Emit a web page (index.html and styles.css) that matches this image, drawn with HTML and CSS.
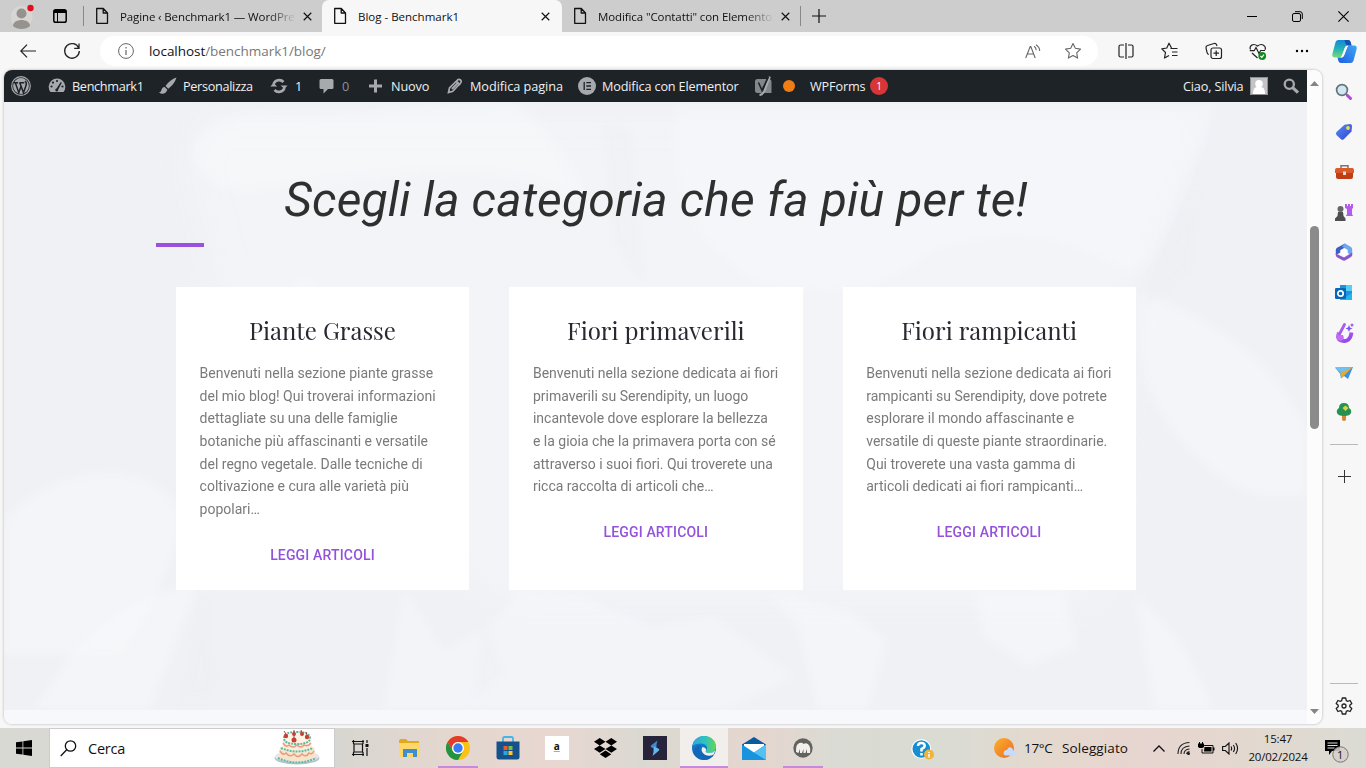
FILE: index.html
```html
<!DOCTYPE html>
<html lang="it">
<head>
<meta charset="utf-8">
<title>Blog - Benchmark1</title>
<link rel="stylesheet" href="styles.css">
</head>
<body>
<svg class="defs" width="0" height="0" aria-hidden="true">
  <defs>
    <symbol id="doc" viewBox="0 0 14 18"><path d="M1.700 1.500h6.600L12.500 6v10.300H1.700zM8.200 1.500V6h4.300" fill="none" stroke="currentColor" stroke-width="1.300" stroke-linejoin="round"/></symbol>
    <symbol id="cross" viewBox="0 0 10 10"><path d="M.8.8l8.400 8.400M9.200.8L.8 9.200" stroke="currentColor" stroke-width="1.300"/></symbol>
    <linearGradient id="gPurple" x1="0" y1="0" x2="1" y2="1"><stop offset="0" stop-color="#c86bf5"/><stop offset="1" stop-color="#8a3ff0"/></linearGradient>
    <linearGradient id="gBlue" x1="0" y1="0" x2="1" y2="1"><stop offset="0" stop-color="#4d93f7"/><stop offset="1" stop-color="#3a3fd2"/></linearGradient>
    <linearGradient id="gEdge" x1="0" y1="0" x2="1" y2="0"><stop offset="0" stop-color="#2aa6e0"/><stop offset=".55" stop-color="#2fc4bd"/><stop offset="1" stop-color="#66d653"/></linearGradient>
    <linearGradient id="gEdgeB" x1="0" y1="0" x2="0" y2="1"><stop offset="0" stop-color="#1a8edb"/><stop offset="1" stop-color="#0c5aa8"/></linearGradient>
    <linearGradient id="gCopA" x1="0" y1="0" x2="0" y2="1"><stop offset="0" stop-color="#1688d8"/><stop offset=".5" stop-color="#24b2b6"/><stop offset="1" stop-color="#78dc76"/></linearGradient>
    <linearGradient id="gCopB" x1="1" y1="0" x2="0" y2="1"><stop offset="0" stop-color="#3fa6f5"/><stop offset="1" stop-color="#1d5fe0"/></linearGradient>
    <linearGradient id="gSun" x1="0" y1="0" x2="1" y2="1"><stop offset="0" stop-color="#fbb02d"/><stop offset="1" stop-color="#ed6b1f"/></linearGradient>
  </defs>
</svg>

<header class="tabstrip">
  <div class="profile"><svg width="24" height="26" viewBox="0 0 24 26"><circle cx="10.500" cy="14" r="11" fill="#d8d6d3"/><circle cx="10.500" cy="10.500" r="5" fill="#96938f"/><path d="M2 23c0-8 17-8 17 0-4 4-13 4-17 0z" fill="#96938f"/><circle cx="19.500" cy="5" r="3.200" fill="#e0101f"/></svg></div>
  <div class="workspace"><svg width="14" height="14" viewBox="0 0 14 14"><rect x=".8" y=".8" width="12.400" height="12.400" rx="1.800" fill="none" stroke="#000" stroke-width="1.500"/><path d="M1 1h12v3H1z"/><path d="M4.500 4v9" stroke="#000"/></svg></div>
  <div class="tab tab-first"><svg class="doc"><use href="#doc"/></svg><span class="tab-title faded">Pagine ‹ Benchmark1 — WordPre</span><svg class="close"><use href="#cross"/></svg></div>
  <div class="tab tab-active"><svg class="doc"><use href="#doc"/></svg><span class="tab-title">Blog - Benchmark1</span><svg class="close"><use href="#cross"/></svg></div>
  <div class="tab tab-last"><svg class="doc"><use href="#doc"/></svg><span class="tab-title faded">Modifica "Contatti" con Elemento</span><svg class="close"><use href="#cross"/></svg></div>
  <div class="new-tab"><svg width="14" height="14" viewBox="0 0 14 14"><path d="M7 0v14M0 7h14" stroke="#111" stroke-width="1.200"/></svg></div>
  <div class="window-buttons">
    <svg width="10" height="10"><path d="M0 5.500h10" stroke="#000"/></svg>
    <svg width="11" height="11" viewBox="0 0 11 11" fill="none" stroke="#000"><rect x=".5" y="2.500" width="8" height="8" rx="1.500"/><path d="M3 .7h5q2.300 0 2.300 2.300v5"/></svg>
    <svg width="11" height="11" viewBox="0 0 10 10"><path d="M.3.3l9.400 9.400M9.700.3L.3 9.700" stroke="#000"/></svg>
  </div>
</header>

<nav class="toolbar">
  <div class="slot"><svg width="16" height="14" viewBox="0 0 16 14" fill="none" stroke="#222" stroke-width="1.200"><path d="M7 .7L.8 7 7 13.300M1 7h15"/></svg></div>
  <div class="slot"><svg width="18" height="18" viewBox="0 0 18 18" fill="none" stroke="#222" stroke-width="1.300"><path d="M15.700 6A7.300 7.300 0 1 0 16.300 9M16 1.500V6.300h-4.800"/></svg></div>
  <div class="address">
    <svg width="16" height="16" viewBox="0 0 16 16"><circle cx="8" cy="8" r="7.400" fill="none" stroke="#666"/><path d="M8 7v5M8 4v1.400" stroke="#555" stroke-width="1.100"/></svg>
    <span class="url"><b>localhost</b>/benchmark1/blog/</span>
    <svg class="read" width="16" height="15" viewBox="0 0 16 15" fill="none" stroke="#666" stroke-width="1.100"><path d="M.7 14L5.200 2.500h.6L10.200 14M2.300 10h6.500M9.200 2.200q2 1.500 2 4M11 .7q3.700 2.400 3.700 6.300"/></svg>
    <svg width="18" height="18" viewBox="0 0 18 18"><path d="M9 1.500l2.300 4.800 5.200.8-3.800 3.700.9 5.300L9 13.500l-4.600 2.600.9-5.300L1.500 7.100l5.200-.8z" fill="none" stroke="#666" stroke-width="1.100" stroke-linejoin="round"/></svg>
  </div>
  <div class="slot"><svg width="16" height="16" viewBox="0 0 16 16" fill="none" stroke="#222" stroke-width="1.200"><path d="M6 2H2.500Q1 2 1 3.500v9Q1 14 2.500 14H6M10 2h3.500Q15 2 15 3.500v9q0 1.500-1.500 1.500H10M8 0v16"/></svg></div>
  <div class="slot"><svg width="18" height="18" viewBox="0 0 18 18" fill="none" stroke="#222" stroke-width="1.200" stroke-linejoin="round"><path d="M10.500 6L8 1.200 5.800 6l-5 .8 3.700 3.700-1 5.500L8 13.400M9.500 6.500h7M11 10h5.500M11 13.500h5.500"/></svg></div>
  <div class="slot"><svg width="18" height="18" viewBox="0 0 18 18" fill="none" stroke="#222" stroke-width="1.200"><rect x="6" y="6" width="10.500" height="10.500" rx="2"/><path d="M11.200 8.500v5.500M8.500 11.200H14M3.800 12.500Q2.500 12 2 10.300L1 6q-.3-2 1.500-2.500l6.500-2q2-.4 2.700 1.500l.3 1"/></svg></div>
  <div class="slot"><svg width="18" height="18" viewBox="0 0 18 18" fill="none" stroke="#222" stroke-width="1.200"><path d="M1.500 7.500C0 4 4 .5 8.500 4 13 .5 17.500 4 16 7.700M.8 8.700h4.400L7 5.500l3 6 1.700-3H16M3 11l5.500 5"/><circle cx="13.200" cy="14" r="3.900" fill="#168822" stroke="none"/><path d="M11.500 14l1.300 1.300 2.200-2.700" stroke="#fff"/></svg></div>
  <div class="slot"><svg width="14" height="4" viewBox="0 0 14 4"><circle cx="2" cy="2" r="1.200"/><circle cx="7" cy="2" r="1.200"/><circle cx="12" cy="2" r="1.200"/></svg></div>
  <div class="slot"><svg width="25" height="23" viewBox="0 0 25 23"><path d="M6.500 0H16q2 0 2.600 2l.9 3.500h-3.800q-2 0-2.700 2L10 15.500Q9.300 17.500 7 17.500H3q-3.500 0-2.500-4L3.300 3Q4 0 6.500 0z" fill="url(#gCopA)"/><path d="M18.500 23H9q-2 0-2.600-2l-.9-3.500h3.800q2 0 2.700-2L15 7.500q.7-2 3-2h4q3.500 0 2.500 4L21.700 20q-.7 3-3.200 3z" fill="url(#gCopB)"/><path d="M12.500 0H16q2 0 2.600 2l.9 3.500h-3.800Q13.500 5 12.500 0z" fill="#174fb5"/><path d="M16.500 5.700q-1 .6-1.500 2L12 15.500q-.7 2-2.700 2H8.500q1-.6 1.500-2l3-8q.7-1.800 2.700-1.800z" fill="#fff"/></svg></div>
</nav>

<div class="middle">
  <section class="viewport">
    <div class="site">
      <div class="adminbar">
        <svg width="20" height="20" viewBox="0 0 20 20"><circle cx="10" cy="10" r="9.300" fill="none" stroke="#a7aaad" stroke-width="1.200"/><circle cx="10" cy="10" r="7.900" fill="#a7aaad"/><path d="M2.800 6.700h4.300M8.300 6.700h5M4.300 6.800l3.500 10 2.200-6.500M8.800 6.800l3.700 10L15 9.500q1-3-1-4.500" fill="none" stroke="#1d2327" stroke-width="1.500"/></svg>
        <svg width="18" height="18" viewBox="0 0 18 18"><path d="M2.500 15A8.300 8.300 0 1 1 15.500 15z" fill="#a7aaad"/><g fill="#1d2327"><circle cx="9" cy="4" r="1.100"/><circle cx="5" cy="5.600" r="1.100"/><circle cx="3.500" cy="9.500" r="1.100"/><circle cx="14.500" cy="9.500" r="1.100"/><path d="M12.800 5l1 .7-3.600 6.800a1.500 1.500 0 1 1-1.700-1z"/></g></svg>
        <span class="tight">Benchmark1</span>
        <svg width="18" height="18" viewBox="0 0 18 18" fill="#a7aaad"><path d="M17.500.5Q11 2.500 6.500 9l2.800 2.800Q15.500 7 17.500.5zM5.700 10Q3 10 2.500 13 2 15.300 0 15.800q6 3 8.400-3z"/></svg>
        <span class="tight">Personalizza</span>
        <svg width="18" height="18" viewBox="0 0 18 18"><path d="M3.500 7A6 6 0 0 1 13.500 5M14.500 11A6 6 0 0 1 4.500 13" fill="none" stroke="#a7aaad" stroke-width="2.600"/><path d="M10.500 8.500h7L14.500 12zM.3 9.500L3.500 6l3.700 3.500z" fill="#a7aaad"/></svg>
        <span>1</span>
        <svg width="16" height="18" viewBox="0 0 16 18"><path d="M2 2h11q1.500 0 1.500 1.500v7q0 1.500-1.500 1.500H9l-4.500 4.500V12H2Q.5 12 .5 10.500v-7Q.5 2 2 2z" fill="#a7aaad"/></svg>
        <span class="dim">0</span>
        <svg width="15" height="14" viewBox="0 0 15 14"><path d="M7.500 .5v13M1 7h13" stroke="#a7aaad" stroke-width="3"/></svg>
        <span>Nuovo</span>
        <svg width="16" height="16" viewBox="0 0 16 16"><path d="M1.500 14.500l1-4.500L10.500 2q1.500-1.300 3 0t0 3L5.800 13.300z" fill="none" stroke="#a7aaad" stroke-width="1.700"/><path d="M5 11l6-6.300M9 3l4 4" stroke="#a7aaad" stroke-width="2"/></svg>
        <span class="loose">Modifica pagina</span>
        <svg width="18" height="18" viewBox="0 0 18 18"><circle cx="9" cy="9" r="9" fill="#a7aaad"/><path d="M6.200 5v8M8.300 5.700h4.700M8.300 9h4.700M8.300 12.300h4.700" stroke="#1d2327" stroke-width="1.300"/></svg>
        <span>Modifica con Elementor</span>
        <svg width="19" height="20" viewBox="0 0 19 20"><path d="M3.500 3h9L7.500 17H3.500Q1 17 1 14.500v-9Q1 3 3.500 3zM15.500 3q2 .5 2 2.500V17H10z" fill="#82878c"/><path d="M15.800.7l-4.600 12.500Q9.500 18.500 5.500 19" fill="none" stroke="#a7aaad" stroke-width="2.200"/><path d="M4.500 6.500l3.400 7.700L14.500.8" fill="none" stroke="#1d2327" stroke-width="1.600"/></svg>
        <i class="seo-dot"></i>
        <span>WPForms</span>
        <em class="badge">1</em>
        <span>Ciao, Silvia</span>
        <svg class="avatar" width="18" height="18" viewBox="0 0 18 18"><path d="M0 0h18v18H0z" fill="#c3c4c7"/><circle cx="9" cy="6.800" r="3.800" fill="#fff"/><path d="M3 17q0-7 4-7h4q4 0 4 7z" fill="#fff"/><path d="M.5.500h17v17H.500z" fill="none" stroke="#8c8f94"/></svg>
        <svg width="17" height="17" viewBox="0 0 17 17" fill="none" stroke="#a7aaad"><circle cx="6.300" cy="6.300" r="4.600" stroke-width="2.300"/><path d="M9.700 9.700l5.300 5" stroke-width="3.200"/></svg>
      </div>
      <main class="hero">
        <svg class="petals" viewBox="0 0 1303 608" preserveAspectRatio="none" aria-hidden="true">
          <defs><filter id="soft"><feGaussianBlur stdDeviation="4"/></filter><filter id="wide"><feGaussianBlur stdDeviation="16"/></filter></defs>
          <path d="M200 10H1200L1130 170 1100 500H500L250 330 180 60z" fill="#f6f8fb" opacity=".45" filter="url(#wide)"/>
          <g fill="#f7f9fc" filter="url(#soft)">
            <path d="M186 52Q196 14 250 10l60 2 200-12q60 40 72 108-50-40-160-36-110 10-180 20Q200 88 186 52z" opacity=".5"/>
            <path d="M672 4h540q-22 66-62 150l-22 22q-90-66-200-26-60 60-180 30-90-60-76-176z" opacity=".4"/>
            <path d="M1136 188q130 50 167 140v66q-60 10-100-30-80-60-67-176z" opacity=".5"/>
            <path d="M0 420q36-48 110-50 70 10 66 60-20 70-60 123H0z" opacity=".5"/>
            <path d="M290 182q20-20 26 10l-26 10zM196 480l-50 128H30q60-110 166-128z" opacity=".5"/>
            <path d="M400 485l40 65 50-30 30-35 60 10 70 30 60-10 80 60-70 33H380z" opacity=".4"/>
            <path d="M764 488l80 20 40 30-20 70h-50l-20-80zM970 488l90-3 14 60-50 20-46-30zM1130 490q50 40 80 118h-60z" opacity=".5"/>
          </g>
          <g fill="#ebedf2" filter="url(#soft)">
            <path d="M600 20l10 120 30 40-14-150zM1140 186l56-100-10 80-46 40zM200 490l-20 110 30-10zM480 520l-10 80 30-30z" opacity=".35"/>
          </g>
        </svg>
        <div class="container">
          <h1>Scegli la categoria che fa più per te!</h1>
          <div class="accent"></div>
          <div class="cards">
            <article class="card">
              <h2>Piante Grasse</h2>
              <p>Benvenuti nella sezione piante grasse<br>del mio blog! Qui troverai informazioni<br>dettagliate su una delle famiglie<br>botaniche più affascinanti e versatile<br>del regno vegetale. Dalle tecniche di<br>coltivazione e cura alle varietà più<br>popolari…</p>
              <a>LEGGI ARTICOLI</a>
            </article>
            <article class="card">
              <h2>Fiori primaverili</h2>
              <p>Benvenuti nella sezione dedicata ai fiori<br>primaverili su Serendipity, un luogo<br>incantevole dove esplorare la bellezza<br>e la gioia che la primavera porta con sé<br>attraverso i suoi fiori. Qui troverete una<br>ricca raccolta di articoli che…</p>
              <a>LEGGI ARTICOLI</a>
            </article>
            <article class="card">
              <h2>Fiori rampicanti</h2>
              <p>Benvenuti nella sezione dedicata ai fiori<br>rampicanti su Serendipity, dove potrete<br>esplorare il mondo affascinante e<br>versatile di queste piante straordinarie.<br>Qui troverete una vasta gamma di<br>articoli dedicati ai fiori rampicanti…</p>
              <a>LEGGI ARTICOLI</a>
            </article>
          </div>
        </div>
      </main>
    </div>
    <div class="scrollbar">
      <svg width="9" height="5"><path d="M0 5L4.500 0 9 5z" fill="#858585"/></svg>
      <div class="thumb"></div>
      <svg width="9" height="5"><path d="M0 0l4.500 5L9 0z" fill="#858585"/></svg>
    </div>
  </section>
  <aside class="sidebar">
    <div><svg width="18" height="18" viewBox="0 0 18 18"><circle cx="7" cy="7" r="5.400" fill="#cfe8f3" stroke="#66727b" stroke-width="1.700"/><path d="M11 11l1.500 1.500" stroke="#777" stroke-width="2"/><path d="M12.500 12.500l3 3" stroke="#ad48dc" stroke-width="3" stroke-linecap="round"/></svg></div>
    <div><svg width="18" height="18" viewBox="0 0 18 18"><path d="M9.500 1.700L15 1q2 0 2 2l-.5 5.500-7.700 7.800q-1.500 1-2.800 0L1.500 12q-1.200-1.500 0-3z" fill="url(#gBlue)"/><circle cx="13" cy="5" r="1.900" fill="#f3df3b"/></svg></div>
    <div><svg width="19" height="16" viewBox="0 0 19 16"><path d="M6 4V1.700h7V4" fill="none" stroke="#777" stroke-width="1.500"/><rect x="1" y="4" width="17" height="11" rx="2" fill="#bf3e16"/><path d="M0 6q0-2 2-2h15q2 0 2 2v3H0z" fill="#da5a2b"/><rect x="8" y="7.500" width="3" height="3.500" fill="#ddd"/></svg></div>
    <div><svg width="20" height="19" viewBox="0 0 20 19"><path d="M11 1h2v2h1V1h2v2h1V1h2v4l-1 1v5l1 2h-7l1-2V6l-2-1z" fill="#b45bee"/><circle cx="6.500" cy="6" r="3" fill="#666"/><path d="M4 9h5l.5 4 2 2.500V18H1v-2.500L3.500 13z" fill="#4e4e4e"/></svg></div>
    <div><svg width="18" height="18" viewBox="0 0 18 18"><path d="M10 .5L2 4.800Q.8 5.500.8 7v5L5.500 9.500V7.200L12 3.500z" fill="#3d5fc4"/><path d="M10 .5l6 3.500q1.200.8 1.200 2.200v6L12.500 10V6.800L7 3.500z" fill="#6fa8ee"/><path d="M.8 10.500L9 14.500l8.200-5v2.600q0 1.200-1.200 2l-5.500 3.200q-1.500.8-3 0L2 14.300Q.8 13.500.8 12z" fill="#8a55cc"/><path d="M9 5.200l3.500 2v3.600L9 12.800l-3.500-2V7.200z" fill="#fff"/></svg></div>
    <div><svg width="18" height="18" viewBox="0 0 18 18"><path d="M5 1h12v15H5z" fill="#2192df"/><path d="M11 1h6v6h-6z" fill="#51d0f6"/><path d="M5 10l6 3 6-4v7H5z" fill="#21b8ed"/><rect x="0" y="4" width="11" height="11" rx="1.300" fill="#0668bb"/><circle cx="5.500" cy="9.500" r="2.700" fill="none" stroke="#fff" stroke-width="1.700"/></svg></div>
    <div><svg width="19" height="20" viewBox="0 0 19 20"><path d="M4 9.500q-3 6 2 8 9 2.500 10.500-8" fill="none" stroke="url(#gPurple)" stroke-width="3.800"/><path d="M2 12h6l1 3q-2 4-5 2.500-3-2-2-5.500z" fill="#c46df3"/><path d="M9.500 1.500L4.500 11" stroke="#a95bed" stroke-width="2.800" stroke-linecap="round"/><path d="M14 2l1 2.500L17.500 5.500 15 6.500 14 9l-1-2.500-2.500-1L13 4.500z" fill="#7755ee"/><circle cx="17" cy="2" r="1.500" fill="#a460f0"/></svg></div>
    <div><svg width="18" height="14" viewBox="0 0 18 14"><path d="M0 1.500L18 1l-5 12-4-3-3 2.500-1-5z" fill="#3393e8"/><path d="M0 1.500L18 1 6 7z" fill="#6fc3f3"/><path d="M5 7L18 1 6.500 12z" fill="#e7a936"/></svg></div>
    <div><svg width="16" height="19" viewBox="0 0 16 19"><path d="M6 11h4v6q-2 2-4 0z" fill="#d38b3b"/><path d="M8 0q5 0 5 5 3 2 2 5-1 3-7 3T1 10q-1-3 2-5 0-5 5-5z" fill="#259153"/><path d="M9.500 2.500l3 2.500-3 3-3-3z" fill="#d6d737"/></svg></div>
    <hr>
    <div class="add"><svg width="13" height="13"><path d="M6.500 0v13M0 6.500h13" stroke="#333"/></svg></div>
    <hr class="low">
    <div class="gear"><svg width="18" height="18" viewBox="0 0 18 18" fill="none" stroke="#222" stroke-width="1.300" stroke-linejoin="round"><path d="M7.300 1h3.400l.6 2.600 1.200.7 2.600-.8 1.700 3-2 1.800v1.400l2 1.800-1.700 3-2.600-.8-1.200.7-.6 2.600H7.300l-.6-2.600-1.200-.7-2.600.8-1.700-3 2-1.800V8.300l-2-1.800 1.700-3 2.600.8 1.200-.7z"/><circle cx="9" cy="9" r="2"/></svg></div>
  </aside>
</div>

<footer class="taskbar">
  <div class="start"><svg width="16" height="16" viewBox="0 0 16 16"><path d="M0 2.300l6.500-.9v6.200H0zM7.300 1.300L16 0v7.600H7.300zM0 8.400h6.500v6.200L0 13.700zM7.300 8.400H16V16l-8.700-1.300z"/></svg></div>
  <div class="search">
    <svg width="17" height="17" viewBox="0 0 17 17" fill="none" stroke="#111" stroke-width="1.300"><circle cx="10.500" cy="6" r="5.200"/><path d="M6.700 9.800L.7 16"/></svg>
    <span>Cerca</span>
    <svg class="cake" width="46" height="36" viewBox="0 0 46 36"><ellipse cx="23" cy="28" rx="22.500" ry="6.500" fill="#b7c4cc"/><ellipse cx="23" cy="26.500" rx="22" ry="6" fill="#e3e8eb"/><path d="M6 17q17 6 34 0l2 11q-19 9-38 0z" fill="#f6e5cb"/><path d="M9 10q14 5 28 0l1 10q-15 6-30 0z" fill="#fbefd9"/><ellipse cx="23" cy="8" rx="13.500" ry="5" fill="#fff4e2"/><g fill="none" stroke="#5eb8aa" stroke-width="2" stroke-dasharray="2 1"><path d="M10 8q0-6 13-6t13 6-13 6-13-6M7 18q16 7 32 0M4 28q19 9 38 0"/></g><path d="M6 21q3 5 6 2 4 5 8 1 4 5 8 0 4 4 7-1 3 2 5-2M9 13q3 5 6 2 4 4 8 0 4 4 7 0 4 2 7-2" fill="none" stroke="#e89a83" stroke-width="1.500"/><g fill="#c63f36"><circle cx="12" cy="6" r="2.200"/><circle cx="20" cy="4" r="2"/><circle cx="28" cy="4" r="2"/><circle cx="33" cy="7" r="2.200"/><circle cx="20" cy="10" r="2.500"/></g><path d="M12 4l-2-3M20 3V0M28 3l-1-3M33 5l-1-3M20 8V5" stroke="#a44"/></svg>
  </div>
  <div class="apps">
    <div><svg width="17" height="16" viewBox="0 0 17 16" fill="none" stroke="#111" stroke-width="1.200"><path d="M0 1.500h12M0 14.500h12M2 4h8.500v8H2zM1.500 0v4M1.500 12v4M11 0v4M11 12v4M15 0v3M15 8v8"/><path d="M13.500 4h3v3h-3z" fill="#111" stroke="none"/></svg></div>
    <div><svg width="21" height="18" viewBox="0 0 21 18"><path d="M0 2q0-2 2-2h5l2 2h11v15H0z" fill="#e2a91f"/><path d="M0 4h21v14H0z" fill="#ffd767"/><path d="M4 18v-8h14v8h-4v-4H8v4z" fill="#3f8fd0"/></svg></div>
    <div class="open"><svg width="24" height="24" viewBox="0 0 24 24"><circle cx="12" cy="12" r="12" fill="#fbc116"/><path d="M1.600 6A12 12 0 0 1 22.400 6H12a6 6 0 0 0-5.200 9z" fill="#e33b2e"/><path d="M1.600 6A12 12 0 0 0 12 24l5.200-9a6 6 0 0 1-10.400 0z" fill="#229342"/><circle cx="12" cy="12" r="6" fill="#fff"/><circle cx="12" cy="12" r="4.700" fill="#3a7af2"/></svg></div>
    <div><svg width="24" height="24" viewBox="0 0 24 24"><path d="M7 6V2.500Q7 1 8.500 1h7Q17 1 17 2.500V6" fill="none" stroke="#45b5e6" stroke-width="1.800"/><path d="M.5 5.500h23V21q0 2.500-2.500 2.500H3Q.5 23.500.5 21z" fill="#17518b"/><path d="M7.500 10h4v4h-4z" fill="#f15b2a"/><path d="M12.500 10h4v4h-4z" fill="#80bd3d"/><path d="M7.500 15h4v4h-4z" fill="#26a9e1"/><path d="M12.500 15h4v4h-4z" fill="#fec52e"/></svg></div>
    <div><b class="amazon">a</b></div>
    <div><svg width="23" height="21" viewBox="0 0 23 21"><path d="M5.700 0l5.800 3.700-5.800 3.700L0 3.700zM17.300 0L23 3.700l-5.700 3.700-5.800-3.700zM0 11.100l5.700-3.700 5.800 3.700-5.800 3.700zM17.300 7.400l5.700 3.700-5.700 3.700-5.800-3.700zM5.800 16.200l5.700-3.700 5.800 3.700-5.800 3.700z"/></svg></div>
    <div><svg width="24" height="24" viewBox="0 0 24 24"><path d="M0 0h24v24H0z" fill="#27233b"/><path d="M14.500 4.500L8 9.500q-.8 1 .3 1.800l4.700 2.200.5-3q-.3-1.500 1-6z" fill="#3e8bd3"/><path d="M9.500 20l6.500-5.500q.8-1-.3-1.800L11 10.500l-.5 3q.5 1.500-1 6.500z" fill="#62b8f2"/></svg></div>
    <div class="open current"><svg width="24" height="24" viewBox="0 0 24 24"><circle cx="12" cy="12" r="12" fill="url(#gEdgeB)"/><path d="M.3 10C2 3 7 0 12 0c7 0 12 5 12 10.500 0 5-4 6.500-7 6.500-3 0-4-1.300-3-2.500 3-4-1-7-5-7-4 0-7 1-8.700 2.500z" fill="url(#gEdge)"/><path d="M9 9q-3.500 4-.5 8.500 4.500 5.500 13 1.700Q18 24 12 24 2 23 2.500 15 3 9 9 9z" fill="#1267b8"/><path d="M14 14.500q-1.500 2 3 2.500 4 0 6.300-2.500l-1.600 4Q17 21 12.500 18.500 8 15 10.500 11q4 .5 3.500 3.500z" fill="#f2efed"/></svg></div>
    <div><svg width="24" height="23" viewBox="0 0 24 23"><path d="M0 7.500L12 0l12 7.500v5H0z" fill="#095b9e"/><path d="M2 7h20v7l-10 4L2 14z" fill="#fff"/><path d="M0 7.500l12 8 12-8V23H0z" fill="#1a93df"/><path d="M12 15.500l12-8V23z" fill="#55c1f3"/></svg></div>
    <div class="open small"><svg width="20" height="20" viewBox="0 0 20 20"><circle cx="10" cy="10" r="9.700" fill="#62625f"/><path d="M3 14q-.5-8 3.500-9 3-.7 4 1 4-2 6 2 1.500 3 .5 7h-3v-4l-1.500 4h-2v-4l-1.500 4H7v-4l-1.500 4z" fill="#f2efec"/></svg></div>
  </div>
  <div class="help"><svg width="23" height="21" viewBox="0 0 23 21"><circle cx="10.300" cy="10" r="9.400" fill="#168ed0" stroke="#fff" stroke-width="1.200"/><path d="M7 7q0-3 3.300-3t3.400 2.700q0 2-3.200 3.300v2.500M10.500 14v2.500" fill="none" stroke="#fff" stroke-width="2.500"/><circle cx="18" cy="15.500" r="5" fill="#efb438"/><path d="M18 13v1M18 15v3.500" stroke="#fff" stroke-width="1.500"/></svg></div>
  <div class="weather"><svg width="22" height="21" viewBox="0 0 22 21"><circle cx="10" cy="10" r="10" fill="url(#gSun)"/><path d="M11.500 17.500q-3-1-1.500-4 1-2 3-1.500 1-3.500 4-2.500 2 .6 2 3 3 .5 2.700 3-.5 2-3 2z" fill="#c7dcfb"/></svg><span class="temp">17°C</span><span class="sky">Soleggiato</span></div>
  <div class="tray">
    <svg width="12" height="7" viewBox="0 0 12 7"><path d="M.5 6.500L6 1l5.500 5.500" fill="none" stroke="#111" stroke-width="1.300"/></svg>
    <svg class="wifi" width="14" height="14" viewBox="0 0 14 14" fill="none" stroke="#222" stroke-width="1.100"><path d="M1 13Q1 2 12.500 1.500M4 13q0-7.500 8.500-8M7 13q0-4.500 5.500-5M9.700 13q0-2 2.800-2.500"/><circle cx="11.500" cy="12.500" r="1" fill="#111"/></svg>
    <svg class="battery" width="17" height="13" viewBox="0 0 17 13"><path d="M5.500 3.500h9.500v7.500H4V7" fill="none" stroke="#111"/><path d="M6.500 5h7v4.500H6zM15 5.500h1.500v3H15zM0 1.500h6V5L4.500 6h-3L0 5zM1 0h1v2H1zM4 0h1v2H4z"/></svg>
    <svg class="volume" width="17" height="13" viewBox="0 0 17 13" fill="none" stroke="#111" stroke-width="1.100"><path d="M.6 4.500h2.700L7 1v11L3.300 8.500H.6zM9 4.500q1.300 2 0 4M11.300 3q2.500 3.500 0 7M13.700 1q3.700 5.500 0 11"/></svg>
  </div>
  <div class="clock"><span>15:47</span><span>20/02/2024</span></div>
  <div class="notify"><svg width="25" height="24" viewBox="0 0 25 24"><path d="M1 1h15v11H8l-3 4v-4H1z"/><path d="M3.500 4h10M3.500 6.500h10M3.500 9h7" stroke="#ddd"/><circle cx="16.500" cy="15.500" r="7.700" fill="#d5cfca" fill-opacity=".88" stroke="#777"/></svg><span>1</span></div>
</footer>
</body>
</html>
```
FILE: styles.css
```css
* { box-sizing: border-box; }
body {
  margin: 0;
  width: 1366px;
  height: 768px;
  overflow: hidden;
  background: #f7f7f7;
  color: #111;
  font-family: "Open Sans", "Noto Sans", sans-serif;
}
svg { display: block; flex: none; }
.defs { position: absolute; }

/* Tab strip */
.tabstrip { height: 32px; display: flex; background: #cdcdcd; }
.profile { width: 53px; padding: 3px 0 0 11px; }
.workspace { width: 31px; padding-top: 9px; }
.tab { height: 32px; display: flex; align-items: center; padding-left: 12px; font-size: 11.5px; position: relative; }
.tab-first { width: 238px; }
.tab-first::before, .tab-last::after { content: ""; position: absolute; top: 6px; width: 1px; height: 20px; background: #888; }
.tab-first::before { left: -1px; }
.tab-last::after { right: 0; }
.tab-active { width: 240px; background: #f7f7f7; border-radius: 7px 7px 0 0; }
.tab-last { width: 239px; }
.doc { width: 14px; height: 18px; margin-right: 10px; margin-left: -1px; }
.tab-title { width: 179px; white-space: nowrap; letter-spacing: -.12px; margin-left: 1px; }
.tab-active .tab-title { letter-spacing: 0; }
.tab-last .tab-title { letter-spacing: -.1px; }
.faded { -webkit-mask-image: linear-gradient(90deg, #000 148px, transparent 176px); mask-image: linear-gradient(90deg, #000 148px, transparent 176px); }
.close { width: 9px; height: 9px; margin-left: 4px; }
.new-tab { padding: 9px 0 0 11px; }
.window-buttons { margin-left: auto; display: flex; align-items: center; gap: 35px; padding-right: 17px; }

/* Toolbar */
.toolbar {
  height: 38px;
  display: grid;
  grid-template-columns: 44px 44px 1010px 44px 44px 44px 44px 44px 40px;
  padding-left: 6px;
  align-items: center;
}
.toolbar .slot { display: flex; justify-content: center; }
.address { height: 30px; margin-left: 6px; border-radius: 15px; background: #fff; display: flex; align-items: center; padding: 0 16px 0 18px; width: 998px; }
.url { margin-left: 15px; font-size: 13.5px; color: #777; letter-spacing: -.04px; }
.url b { font-weight: 400; color: #111; }
.read { margin: 0 23px 0 auto; }

/* Content frame */
.middle { height: 658px; display: flex; padding-left: 4px; }
.viewport { width: 1318px; height: 654px; display: flex; overflow: hidden; border-radius: 8px; background: #fcfcfc; box-shadow: 0 0 2px 1px #d4d4d8; }
.site { width: 1303px; background: #f7f8fc; }
.adminbar {
  height: 32px;
  display: grid;
  align-items: center;
  grid-template-columns: 37px 24px 87px 24px 87px 25px 24px 23px 26px 23px 56px 23px 108px 24px 152px 29px 27px 60px 313px 67px 33px 1fr;
  padding-left: 7px;
  background: #1d2327;
  color: #f0f0f1;
  font-size: 12.7px;
  letter-spacing: -.16px;
  white-space: nowrap;
}
.tight { letter-spacing: -.33px; }
.loose { letter-spacing: -.04px; }
.dim { color: #8c9196; }
.seo-dot { width: 12px; height: 12px; border-radius: 50%; background: #f07c16; }
.badge { width: 18px; height: 18px; border-radius: 50%; background: #d63638; color: #fff; font-size: 10px; font-style: normal; line-height: 18px; text-align: center; }

/* Page */
.hero { height: 608px; position: relative; background: #f0f1f5; }
.petals { position: absolute; inset: 0; width: 100%; height: 100%; }
.container { position: relative; width: 1000px; margin-left: 152px; padding-top: 69px; }
h1 { margin: 0; font: italic 400 48px/58px Roboto, sans-serif; letter-spacing: .16px; text-align: center; color: #2f2f2f; white-space: nowrap; }
.accent { width: 48px; height: 4px; margin-top: 14px; background: #9b51e0; }
.cards { display: grid; grid-template-columns: repeat(3, 293.330px); gap: 40px; padding: 40px 20px 0; }
.card { height: 303px; padding: 24px 24px 0 23.600px; background: #fff; text-align: center; font-family: Roboto, sans-serif; }
.card h2 { margin: 0 0 11px; height: 40px; font: 400 24px/38px "Playfair Display", "Liberation Serif", serif; color: #292933; white-space: nowrap; }
.card p { margin: 0 0 23px; font-size: 14px; line-height: 22.680px; color: #7a7a7a; text-align: left; white-space: nowrap; }
.card a { display: block; font-size: 14px; line-height: 22px; font-weight: 500; letter-spacing: .16px; color: #9351dc; }

.scrollbar { width: 15px; display: flex; flex-direction: column; align-items: center; padding: 11px 0 10px; }
.thumb { width: 9px; height: 203px; border-radius: 5px; margin: 140px 0 auto; background: #8b8b8b; }

/* Edge side rail */
.sidebar { width: 44px; display: flex; flex-direction: column; align-items: center; padding-top: 2px; }
.sidebar div { height: 40.100px; flex: none; display: flex; align-items: center; justify-content: center; }
.sidebar hr { width: 28px; height: 1px; flex: none; margin: 11px 0 12px; border: 0; background: #bababa; }
.sidebar .low { margin: 186px 0 2px; }

/* Taskbar */
.taskbar {
  height: 40px;
  display: flex;
  background: linear-gradient(90deg, #d8d9d3 0, #d7d6d1 330px, #e3d7cf 440px, #e8d7d1 560px, #dad9d1 640px, #e5d6cf 760px, #d9dbd4 840px, #dbdbd3 960px, #e4d9ce 1040px, #e7d5d0 1140px, #e3d8cf 1240px, #dbdbd3 1366px);
}
.taskbar > div { flex: none; }
.start { width: 49px; padding: 12px 0 0 16px; }
.search { width: 286px; background: #fff; border: 1px solid #ccc; display: flex; align-items: center; padding: 0 14px 0 10px; font-size: 14.500px; }
.search span { margin-left: 11px; letter-spacing: -.25px; }
.cake { margin-left: auto; }
.apps { display: flex; width: 491px; padding-left: 1px; }
.apps div { width: 48px; flex: none; height: 40px; margin-right: 1.200px; display: flex; align-items: center; justify-content: center; }
.apps .open { background: linear-gradient(#c58ae0, #c58ae0) center bottom / 40px 2px no-repeat; }
.apps .current { background-color: #f2eeec; background-size: 48px 2px; }
.amazon { width: 24px; height: 24px; background: #fff; font-size: 10px; line-height: 20px; text-align: center; text-decoration: underline; text-decoration-color: #ed9b31; }
.help { width: 168px; padding: 11px 0 0 85px; }
.weather { display: flex; align-items: center; font-size: 13.500px; }
.temp { margin-left: 8px; width: 38px; letter-spacing: -.3px; }
.sky { width: 91px; letter-spacing: .1px; }
.tray { display: flex; align-items: center; width: 87px; }
.wifi { margin-left: 12px; }
.battery { margin-left: 7px; }
.volume { margin-left: 7px; }
.clock { width: 76px; display: flex; flex-direction: column; align-items: center; padding-top: 2px; font-size: 11.500px; line-height: 18px; letter-spacing: -.2px; }
.notify { width: 42px; position: relative; padding: 11px 0 0 8px; }
.notify span { position: absolute; left: 21px; top: 18px; font-size: 11px; line-height: 17px; }
```
